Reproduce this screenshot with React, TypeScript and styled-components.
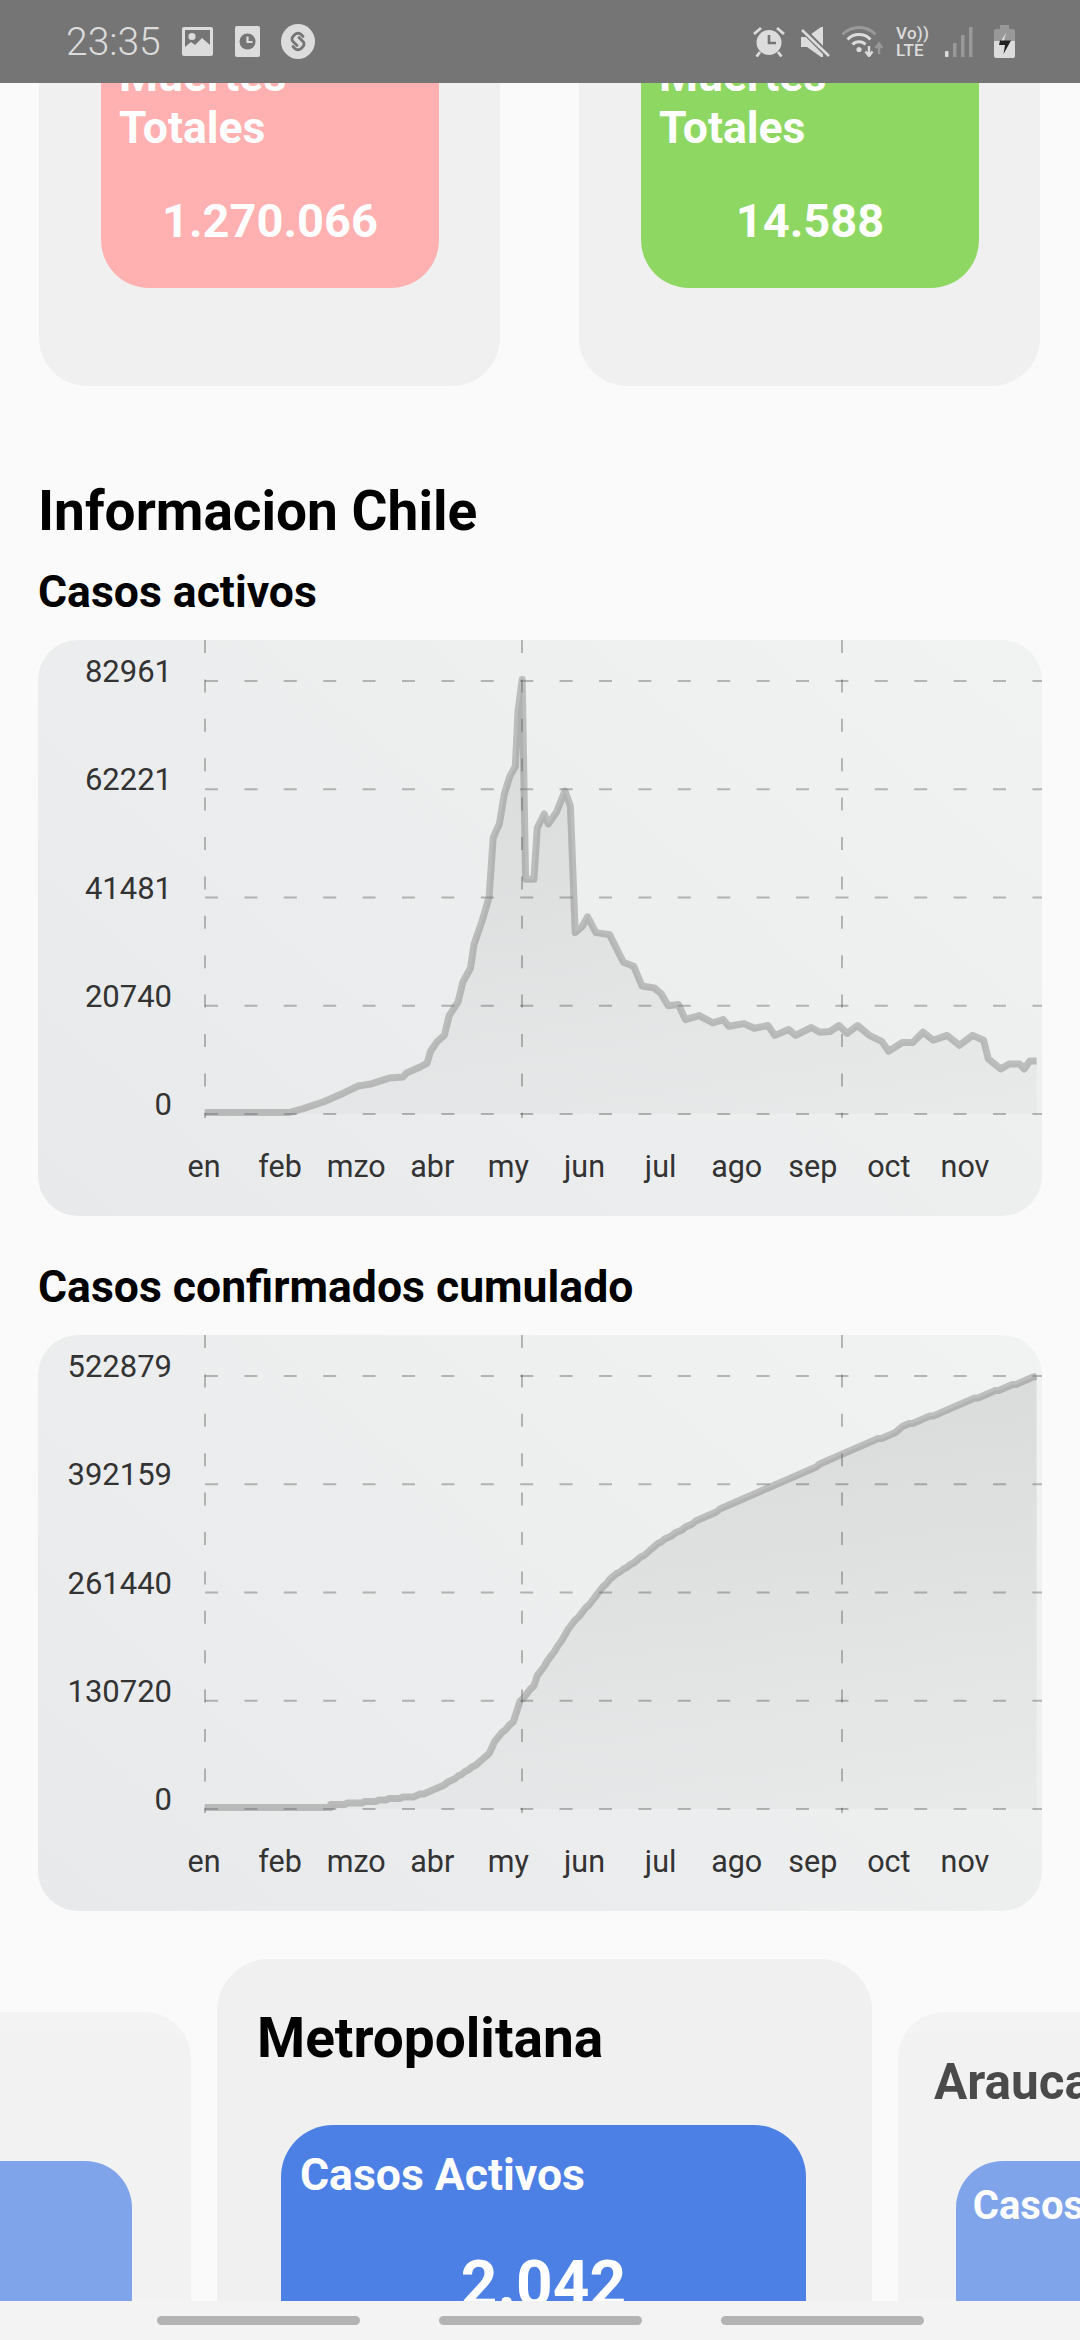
import React from "react";
import styled, { createGlobalStyle } from "styled-components";

const GlobalStyle = createGlobalStyle`
  html, body {
    margin: 0;
    padding: 0;
    background: #fafafa;
  }
  * {
    box-sizing: border-box;
  }
`;

const Page = styled.div`
  position: relative;
  width: 1080px;
  height: 2340px;
  overflow: hidden;
  background: #fafafa;
  font-family: Roboto, "Liberation Sans", sans-serif;
`;

const StatusBar = styled.div`
  position: absolute;
  top: 0;
  left: 0;
  right: 0;
  height: 83px;
  z-index: 3;
  display: flex;
  align-items: center;
  justify-content: space-between;
  padding: 0 65px 0 66px;
  background: #757575;
  color: #dcdcdc;
`;

const StatusGroup = styled.div`
  display: flex;
  align-items: center;
`;

const IconSlot = styled.span<{ $left: number }>`
  display: flex;
  margin-left: ${(props) => props.$left}px;
`;

const Clock = styled.span`
  font-size: 39px;
  font-weight: 300;
  line-height: 44px;
`;

const Volte = styled.div`
  display: flex;
  flex-direction: column;
  width: 31px;
  font-size: 17px;
  font-weight: 500;
  line-height: 17px;
  letter-spacing: 0.3px;
  white-space: nowrap;
`;

const NavBar = styled.div`
  position: absolute;
  left: 0;
  right: 0;
  bottom: 0;
  height: 39px;
  z-index: 3;
  display: grid;
  grid-template-columns: repeat(3, 203px);
  justify-content: start;
  column-gap: 79px;
  padding: 15px 0 0 157px;
  background: #f3f3f3;
`;

const NavPill = styled.div`
  height: 9px;
  border-radius: 5px;
  background: #b3b3b3;
`;

const StatRow = styled.div`
  display: grid;
  grid-template-columns: 461px 461px;
  column-gap: 79px;
  margin-top: -10px;
  padding-left: 39px;
`;

const StatCard = styled.div`
  padding: 40px 61px 98px 62px;
  border-radius: 48px;
  background: #f0f0f0;
`;

const StatInner = styled.div<{ $color: string }>`
  padding: 20px 18px 39px;
  border-radius: 48px;
  background: ${(props) => props.$color};
  color: #fff;
`;

const StatLabel = styled.div`
  font-size: 44.5px;
  font-weight: 700;
  line-height: 52px;
`;

const StatNumber = styled.div`
  margin-top: 39px;
  font-size: 47px;
  font-weight: 700;
  line-height: 56px;
  text-align: center;
`;

const Section = styled.section`
  padding: 0 38px;
`;

const SectionTitle = styled.h1`
  margin: 95px 0 0;
  font-size: 55px;
  font-weight: 700;
  line-height: 60px;
  color: #000;
`;

const ChartTitle = styled.h2<{ $top: number }>`
  margin: ${(props) => props.$top}px 0 24px;
  font-size: 44.5px;
  font-weight: 700;
  line-height: 48px;
  color: #000;
`;

const ChartCard = styled.div`
  height: 576px;
  border-radius: 40px;
  overflow: hidden;
  background: linear-gradient(40deg, #e8e9ea 0%, #f1f2f2 100%);
`;

const ChartSvg = styled.svg`
  display: block;
  width: 100%;
  height: 100%;
`;

const AxisLabel = styled.text<{ $size: number }>`
  font-family: Roboto, "Liberation Sans", sans-serif;
  font-size: ${(props) => props.$size}px;
  fill: #333;
`;

const Carousel = styled.div`
  display: flex;
  justify-content: center;
  align-items: flex-start;
  gap: 26px;
  width: 1080px;
  margin-top: 48px;
  padding-left: 9px;
`;

const RegionCard = styled.div<{ $side?: boolean }>`
  flex: 0 0 655px;
  padding: 47px 66px 60px 64px;
  border-radius: 52px;
  background: #f0f0f0;
  ${(props) => props.$side && "zoom: 0.9; opacity: 0.7; margin-top: 59px;"}
`;

const RegionName = styled.div`
  margin-left: -24px;
  font-size: 55px;
  font-weight: 700;
  line-height: 64px;
  color: #000;
  white-space: nowrap;
`;

const RegionInner = styled.div`
  margin-top: 55px;
  padding: 24px 19px 40px;
  border-radius: 52px;
  background: #4d80e4;
  color: #fff;
`;

const RegionLabel = styled.div`
  font-size: 44.5px;
  font-weight: 700;
  line-height: 52px;
  white-space: nowrap;
`;

const RegionNumber = styled.div`
  margin-top: 46px;
  font-size: 64px;
  font-weight: 700;
  line-height: 76px;
  text-align: center;
`;

const ICON = "#dcdcdc";
const DIM = "#999";
const BAR = "#757575";

const ImageIcon = () => (
  <svg width="31" height="29" viewBox="0 0 31 29">
    <rect width="31" height="29" rx="2" fill={ICON} />
    <rect x="3" y="3" width="25" height="20" fill={BAR} />
    <circle cx="10" cy="9.5" r="3.6" fill={ICON} />
    <path d="M3 24V20L9 15l4 3 7-7 8 7v6z" fill={ICON} />
  </svg>
);

const ClockCardIcon = () => (
  <svg width="25" height="31" viewBox="0 0 25 31">
    <rect width="25" height="31" rx="2" fill={ICON} />
    <circle cx="12.5" cy="15.5" r="8" fill={BAR} />
    <path d="M12.5 10.5v5.5h5" fill="none" stroke={ICON} strokeWidth="2.2" />
  </svg>
);

const ShazamIcon = () => (
  <svg width="34" height="35" viewBox="0 0 34 35">
    <ellipse cx="17" cy="17.5" rx="17" ry="17.5" fill={ICON} />
    <g fill="none" stroke={BAR} strokeWidth="2.8" strokeLinecap="round">
      <path d="M16 21.500 12 17.500a3.600 3.600 0 0 1 0-5.100l1.800-1.800a4.500 4.500 0 0 1 6.400 0l1.800 1.800" />
      <path d="M18 13.500 22 17.500a3.600 3.600 0 0 1 0 5.100l-1.800 1.800a4.500 4.500 0 0 1-6.400 0L12 22.600" />
    </g>
  </svg>
);

const AlarmIcon = () => (
  <svg width="32" height="31" viewBox="0 0 32 31">
    <circle cx="16" cy="16.5" r="12.5" fill={ICON} />
    <path d="M16 9v8h7" fill="none" stroke={BAR} strokeWidth="2.6" />
    <path
      d="M1 8 8 2M31 8 24 2M7 26l-3.500 4.500M25 26l3.500 4.500"
      fill="none"
      stroke={ICON}
      strokeWidth="2.800"
    />
  </svg>
);

const MuteIcon = () => (
  <svg width="29" height="30" viewBox="0 0 29 30">
    <path d="M0 10h6L20 0h2v30h-2L6 20H0z" fill={ICON} />
    <path d="M0 1 29 30" stroke={BAR} strokeWidth="6" />
    <path d="M1 3 28 29" stroke={ICON} strokeWidth="2.600" />
  </svg>
);

const WifiIcon = () => (
  <svg width="41" height="31" viewBox="0 0 41 31">
    <g fill="none" strokeWidth="3">
      <path d="M.5 8.500a23 23 0 0 1 33 0" stroke={DIM} />
      <path d="M5.500 13.500a16 16 0 0 1 23 0" stroke={ICON} />
      <path d="M10.500 18.500a9 9 0 0 1 13 0" stroke={ICON} />
    </g>
    <circle cx="17" cy="23.500" r="2.600" fill={ICON} />
    <path d="M27 20v9M23.500 25.500 27 30l3.500-4.500" fill="none" stroke={ICON} strokeWidth="2.400" />
    <path d="M37 28v-10M33.500 22 37 17.500l3.500 4.500" fill="none" stroke={DIM} strokeWidth="2.400" />
  </svg>
);

const SignalIcon = () => (
  <svg width="28" height="30" viewBox="0 0 28 30">
    <rect x="0" y="24" width="3.500" height="6" rx="1" fill={ICON} />
    <rect x="8" y="16" width="3.500" height="14" fill={DIM} />
    <rect x="16" y="8" width="3.500" height="22" fill={DIM} />
    <rect x="24" y="0" width="3.500" height="30" fill={DIM} />
  </svg>
);

const BatteryIcon = () => (
  <svg width="21" height="33" viewBox="0 0 21 33">
    <path d="M6 0h9v4h4a2 2 0 0 1 2 2v10H0V6a2 2 0 0 1 2-2h4z" fill={DIM} />
    <path d="M0 16h21v15a2 2 0 0 1-2 2H2a2 2 0 0 1-2-2z" fill={ICON} />
    <path d="M12 8 7 16h3z" fill={ICON} />
    <path d="M6 15.500h11L9.500 29l1.500-9H5z" fill="#222" />
  </svg>
);

const MONTHS = ["en", "feb", "mzo", "abr", "my", "jun", "jul", "ago", "sep", "oct", "nov"];

const GRID_LEFT = 167;
const GRID_RIGHT = 1004;
const GRID_TOP = 41;
const GRID_STEP = 108.25;
const GRID_VERTICAL = [167, 484, 804];

// points traced from the picture, card left edge at 55 and 1.452 px per unit
// across, 2.529 px per unit down
const traced = (pts: number[][], top: number) =>
  pts.map(([x, y]) => [(x - 55) / 1.452, (y - top) / 2.529]);

// daily totals make small stairs in the cumulative curve
const stairs = (pts: number[][], stepX: number, stepY: number) => {
  const out: number[][] = [];
  for (let i = 0; i < pts.length - 1; i++) {
    const [x1, y1] = pts[i];
    const [x2, y2] = pts[i + 1];
    const n = Math.max(1, Math.round((x2 - x1) / stepX));
    for (let j = 0; j < n; j++) {
      const y = y1 + ((y2 - y1) * j) / n;
      out.push([x1 + ((x2 - x1) * j) / n, Math.round(y / stepY) * stepY]);
    }
  }
  out.push(pts[pts.length - 1]);
  return out;
};

const ACTIVE = traced(
  [
    [297, 1245], [420, 1245], [440, 1235], [470, 1218], [500, 1195], [520, 1178], [540, 1172],
    [565, 1158], [585, 1155], [590, 1145], [610, 1130], [620, 1120], [625, 1090], [635, 1065],
    [645, 1050], [652, 1000], [665, 965], [672, 915], [683, 880], [688, 820], [700, 760],
    [710, 700], [716, 550], [725, 515], [732, 440], [740, 395], [748, 370], [752, 230],
    [758, 150], [763, 655], [775, 655], [780, 525], [790, 490], [796, 515], [808, 485],
    [820, 432], [828, 470], [835, 790], [845, 775], [853, 750], [865, 790], [885, 795],
    [905, 865], [920, 875], [932, 925], [950, 930], [960, 945], [970, 975], [985, 972],
    [995, 1010], [1015, 1000], [1035, 1018], [1050, 1010], [1058, 1027], [1080, 1020],
    [1095, 1032], [1115, 1025], [1125, 1050], [1145, 1035], [1155, 1050], [1178, 1030],
    [1190, 1042], [1205, 1040], [1218, 1025], [1230, 1045], [1245, 1025], [1262, 1050],
    [1280, 1065], [1290, 1090], [1310, 1068], [1325, 1068], [1340, 1042], [1355, 1062],
    [1375, 1050], [1393, 1075], [1412, 1050], [1428, 1062], [1435, 1110], [1453, 1135],
    [1465, 1122], [1480, 1122], [1487, 1135], [1495, 1115], [1505, 1115],
  ],
  50
);

const CONFIRMED = stairs(
  traced(
    [
      [297, 1232], [480, 1232], [480, 1225], [520, 1222], [550, 1215], [600, 1205], [620, 1195],
      [650, 1170], [670, 1150], [690, 1125], [710, 1095], [718, 1065], [745, 1015], [755, 965],
      [775, 925], [780, 900], [800, 850], [815, 810], [825, 780], [840, 750], [860, 710],
      [885, 655], [910, 625], [935, 595], [955, 565], [975, 545], [1010, 510], [1050, 475],
      [1080, 450], [1115, 425], [1160, 390], [1210, 350], [1250, 318], [1300, 285], [1310, 270],
      [1360, 238], [1405, 205], [1445, 180], [1505, 143],
    ],
    38
  ),
  3.4,
  1.5
);

const Chart = ({ id, labels, points }: { id: string; labels: string[]; points: number[][] }) => {
  const line = points.map(([x, y]) => `${x.toFixed(1)},${y.toFixed(1)}`).join(" ");
  const baseline = GRID_TOP + GRID_STEP * 4;
  const first = points[0][0].toFixed(1);
  const last = points[points.length - 1][0].toFixed(1);

  return (
    <ChartCard>
      <ChartSvg viewBox="0 0 1004 576">
        <defs>
          <linearGradient id={id} x1="0" y1="0" x2="0" y2="1">
            <stop offset="0" stopColor="#808080" stopOpacity="0.2" />
            <stop offset="1" stopColor="#808080" stopOpacity="0.05" />
          </linearGradient>
        </defs>
        <polygon points={`${first},${baseline} ${line} ${last},${baseline}`} fill={`url(#${id})`} />
        {labels.map((label, i) => (
          <g key={label}>
            <line
              x1={GRID_LEFT}
              x2={GRID_RIGHT}
              y1={GRID_TOP + GRID_STEP * i}
              y2={GRID_TOP + GRID_STEP * i}
              stroke="#000"
              strokeOpacity="0.25"
              strokeWidth="2"
              strokeDasharray="13 26.4"
            />
            <AxisLabel $size={31} x={134} y={GRID_TOP + GRID_STEP * i + 1} textAnchor="end">
              {label}
            </AxisLabel>
          </g>
        ))}
        {GRID_VERTICAL.map((x) => (
          <line
            key={x}
            x1={x}
            x2={x}
            y1={0}
            y2={baseline + 4}
            stroke="#000"
            strokeOpacity="0.25"
            strokeWidth="2"
            strokeDasharray="13 26.4"
          />
        ))}
        <polyline
          points={line}
          fill="none"
          stroke="#787878"
          strokeOpacity="0.42"
          strokeWidth="7"
          strokeLinejoin="round"
        />
        {MONTHS.map((month, i) => (
          <AxisLabel $size={30.5} key={month} x={166 + i * 76.1} y={537} textAnchor="middle">
            {month}
          </AxisLabel>
        ))}
      </ChartSvg>
    </ChartCard>
  );
};

const Region = ({ name, number, side }: { name: string; number: string; side?: boolean }) => (
  <RegionCard $side={side}>
    <RegionName>{name}</RegionName>
    <RegionInner>
      <RegionLabel>Casos Activos</RegionLabel>
      <RegionNumber>{number}</RegionNumber>
    </RegionInner>
  </RegionCard>
);

export default function App() {
  return (
    <Page>
      <GlobalStyle />
      <StatusBar>
        <StatusGroup>
          <Clock>23:35</Clock>
          <IconSlot $left={21}><ImageIcon /></IconSlot>
          <IconSlot $left={22}><ClockCardIcon /></IconSlot>
          <IconSlot $left={21}><ShazamIcon /></IconSlot>
        </StatusGroup>
        <StatusGroup>
          <AlarmIcon />
          <IconSlot $left={16}><MuteIcon /></IconSlot>
          <IconSlot $left={12}><WifiIcon /></IconSlot>
          <IconSlot $left={13}>
            <Volte>
              <span>Vo))</span>
              <span>LTE</span>
            </Volte>
          </IconSlot>
          <IconSlot $left={18}><SignalIcon /></IconSlot>
          <IconSlot $left={21}><BatteryIcon /></IconSlot>
        </StatusGroup>
      </StatusBar>

      <StatRow>
        <StatCard>
          <StatInner $color="#ffb0b0">
            <StatLabel>Muertes Totales</StatLabel>
            <StatNumber>1.270.066</StatNumber>
          </StatInner>
        </StatCard>
        <StatCard>
          <StatInner $color="#8ed763">
            <StatLabel>Muertes Totales</StatLabel>
            <StatNumber>14.588</StatNumber>
          </StatInner>
        </StatCard>
      </StatRow>

      <Section>
        <SectionTitle>Informacion Chile</SectionTitle>
        <ChartTitle $top={27}>Casos activos</ChartTitle>
        <Chart id="activeFill" labels={["82961", "62221", "41481", "20740", "0"]} points={ACTIVE} />
        <ChartTitle $top={47}>Casos confirmados cumulado</ChartTitle>
        <Chart
          id="confirmedFill"
          labels={["522879", "392159", "261440", "130720", "0"]}
          points={CONFIRMED}
        />
      </Section>

      <Carousel>
        <Region name="Valparaíso" number="1.204" side />
        <Region name="Metropolitana" number="2.042" />
        <Region name="Araucanía" number="1.731" side />
      </Carousel>

      <NavBar>
        <NavPill />
        <NavPill />
        <NavPill />
      </NavBar>
    </Page>
  );
}
